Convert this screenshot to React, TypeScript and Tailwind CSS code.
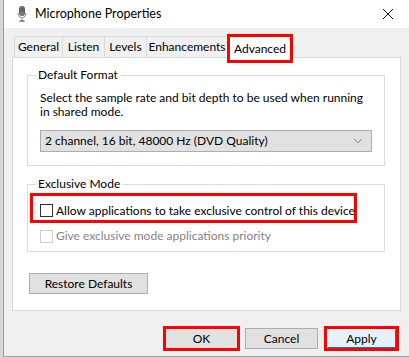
import { ChevronDown } from 'lucide-react';

const font = { fontFamily: 'Lato, "Liberation Sans", sans-serif' };

function MicIcon() {
  return (
    <svg width="10" height="16" viewBox="0 0 10 16" className="shrink-0">
      <rect x="2.5" y="0.5" width="5" height="9" rx="2" fill="#7a7a7a" stroke="#5a5a5a" />
      <line x1="3" y1="3" x2="7" y2="3" stroke="#4a4a4a" />
      <line x1="3" y1="5" x2="7" y2="5" stroke="#4a4a4a" />
      <path d="M1 7 Q1 11.5 5 11.5 Q9 11.5 9 7" fill="none" stroke="#8a8a8a" />
      <line x1="5" y1="11.5" x2="5" y2="14.5" stroke="#8a8a8a" />
      <line x1="2.5" y1="15" x2="7.5" y2="15" stroke="#6a6a6a" strokeWidth="1.5" />
    </svg>
  );
}

function Checkbox({ disabled }: { disabled?: boolean }) {
  return (
    <span
      className={
        'w-[13px] h-[13px] shrink-0 bg-white border ' +
        (disabled ? 'border-[#cccccc]' : 'border-[#333333]')
      }
    />
  );
}

function Tab({ label, width }: { label: string; width: string }) {
  return (
    <div
      className={
        'h-[21px] bg-[#f0f0f0] border-l border-t border-[#d9d9d9] flex items-center justify-center text-[12px] text-black ' +
        width
      }
    >
      {label}
    </div>
  );
}

export default function App() {
  return (
    <div className="w-[409px] h-[357px] flex bg-[#f0f0f0] overflow-hidden" style={font}>
      {/* desktop behind the dialog */}
      <div className="w-[3px] h-full bg-[#d6d6d6]" />

      <div className="flex-1 flex flex-col border-l border-[#9a9a9a]">
        {/* title bar */}
        <div className="h-[28px] bg-white flex items-center">
          <div className="ml-[13px] mr-[8px] flex items-center">
            <MicIcon />
          </div>
          <span className="text-[12.5px] text-black">Microphone Properties</span>
          <svg width="12" height="12" viewBox="0 0 12 12" className="ml-auto mr-[15px]">
            <path d="M1 1 L11 11 M11 1 L1 11" stroke="#111" strokeWidth="1" />
          </svg>
        </div>

        <div className="flex-1 flex flex-col pl-[8px] border-b border-[#a0a0a0]">
          {/* tabs */}
          <div className="mt-[6px] h-[23px] flex items-end pl-[2px]">
            <Tab label="General" width="w-[48px]" />
            <Tab label="Listen" width="w-[42px]" />
            <Tab label="Levels" width="w-[42px]" />
            <Tab label="Enhancements" width="w-[82px] border-r" />
            <div className="relative z-10 w-[66px] h-[29px] -mb-[6px] -ml-px bg-white border-[3px] border-[#ff0000] flex justify-center pt-[3px] text-[12px] text-black">
              Advanced
            </div>
          </div>

          {/* tab page */}
          <div className="w-[389px] h-[254px] bg-white border border-[#d9d9d9] flex flex-col text-[12px] text-black">
            <fieldset className="mt-[10px] ml-[14px] w-[358px] h-[98px] border border-[#dcdcdc] px-[12px]">
              <legend className="ml-[-4px] px-[2px] leading-[14px]">Default Format</legend>
              <p className="mt-[9px] leading-[14px]">
                Select the sample rate and bit depth to be used when running
                <br />
                in shared mode.
              </p>
              <div className="mt-[11px] h-[22px] bg-[#e1e1e1] border border-[#adadad] flex items-center pl-[4px] pr-[6px]">
                <span>2 channel, 16 bit, 48000 Hz (DVD Quality)</span>
                <ChevronDown size={14} strokeWidth={1.2} color="#555" className="ml-auto" />
              </div>
            </fieldset>

            <fieldset className="mt-[11px] ml-[14px] w-[358px] h-[75px] border border-[#dcdcdc] pl-[2px]">
              <legend className="ml-[6px] px-[2px] leading-[14px]">Exclusive Mode</legend>
              <div className="mt-[2px] w-[327px] h-[30px] border-[3px] border-[#ff0000] flex items-center gap-[3px] pl-[7px] pt-[5px] whitespace-nowrap">
                <Checkbox />
                <span>Allow applications to take exclusive control of this device</span>
              </div>
              <div className="mt-[4px] flex items-center gap-[3px] pl-[10px] text-[#858585] whitespace-nowrap">
                <Checkbox disabled />
                <span>Give exclusive mode applications priority</span>
              </div>
            </fieldset>

            <button className="mt-[21px] ml-[16px] w-[119px] h-[21px] bg-[#e1e1e1] border border-[#adadad] text-[12px] text-black">
              Restore Defaults
            </button>
          </div>

          {/* dialog buttons */}
          <div className="mt-[15px] mb-[5px] flex items-center justify-end pr-[10px] text-[12px] text-black">
            <div className="w-[77px] h-[25px] border-[3px] border-[#ff0000] bg-[#e1e1e1] flex items-center justify-center">
              OK
            </div>
            <button className="ml-[5px] w-[73px] h-[21px] bg-[#e1e1e1] border border-[#adadad]">Cancel</button>
            <div className="ml-[6px] w-[75px] h-[25px] border-[3px] border-[#ff0000]">
              <div className="w-full h-full bg-[#e5f1fb] border border-[#0078d7] border-l-[#e5f1fb] border-t-[#e5f1fb] flex items-center justify-center">
                Apply
              </div>
            </div>
          </div>
        </div>
      </div>
    </div>
  );
}
